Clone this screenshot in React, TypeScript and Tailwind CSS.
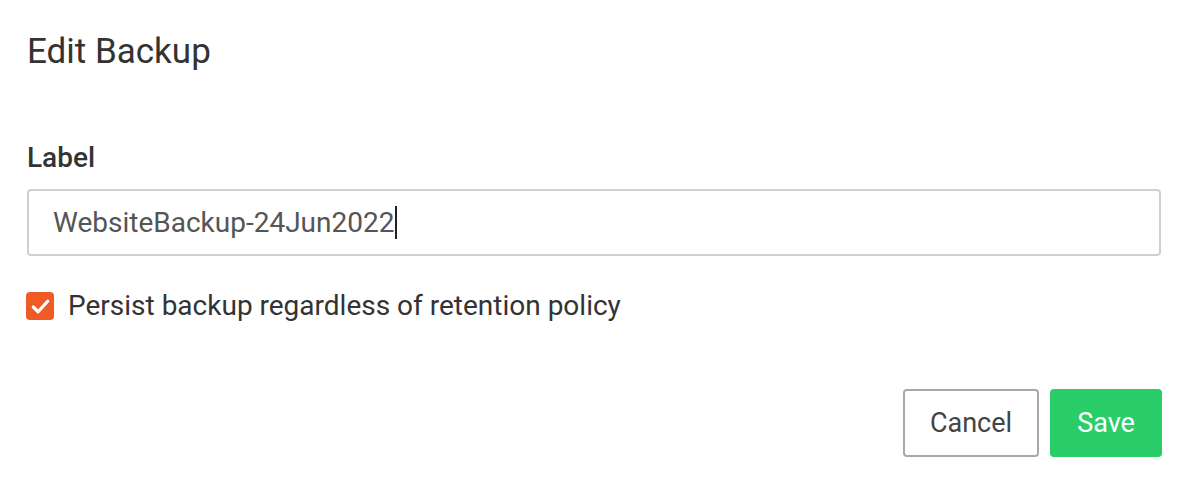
import { useState } from "react";

export default function App() {
  const [label, setLabel] = useState("WebsiteBackup-24Jun2022");
  const [persist, setPersist] = useState(true);

  return (
    <div className="min-h-screen bg-white pl-[27px] pr-[24px] pt-[31px] font-['Roboto',sans-serif]">
      <h2 className="text-[35px] leading-[42px] font-normal text-[#333]">Edit Backup</h2>

      <label className="mt-[69px] block text-[28px] leading-[32px] font-medium text-[#333]">Label</label>
      <div className="mt-[15px] mr-[1px] flex h-[67px] items-center rounded-[4px] border-2 border-[#cfcfcf] px-[24px]">
        <span className="text-[28px] leading-[32px] text-[#555]">{label}</span>
        <span className="ml-[1px] h-[33px] w-[2px] bg-[#222]" />
        <input
          className="sr-only"
          value={label}
          onChange={(e) => setLabel(e.target.value)}
        />
      </div>

      <label className="mt-[34px] -ml-[1px] flex items-center gap-[14px]">
        <button
          type="button"
          onClick={() => setPersist(!persist)}
          className="flex h-[28px] w-[28px] items-center justify-center rounded-[4px] bg-[#f05a24]"
        >
          {persist && (
            <svg viewBox="0 0 24 24" className="h-[23px] w-[23px]" fill="none" stroke="white" strokeWidth="3.4" strokeLinecap="round" strokeLinejoin="round">
              <path d="M4.5 12.5l5 5 10-11" />
            </svg>
          )}
        </button>
        <span className="text-[28px] leading-[32px] text-[#333]">Persist backup regardless of retention policy</span>
      </label>

      <div className="mt-[67px] flex justify-end gap-[11px]">
        <button className="h-[68px] w-[136px] rounded-[4px] border-2 border-[#a8a8a8] bg-white text-[27px] text-[#444]">
          Cancel
        </button>
        <button className="h-[68px] w-[112px] rounded-[4px] bg-[#2ace69] text-[27px] text-white">
          Save
        </button>
      </div>
    </div>
  );
}
